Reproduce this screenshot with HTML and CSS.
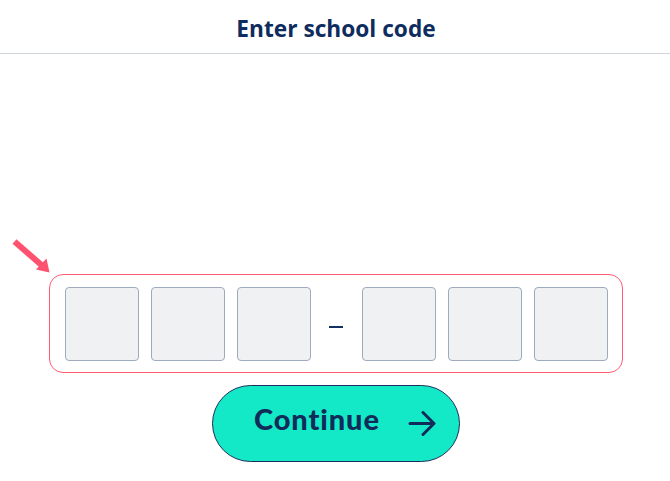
FILE: index.html
```html
<!DOCTYPE html>
<html lang="en">
<head>
<meta charset="utf-8">
<title>Enter school code</title>
<link rel="stylesheet" href="styles.css">
</head>
<body>
<header class="header">
  <h1 class="title">Enter school code</h1>
</header>
<main class="main">
  <div class="code-box">
    <svg class="pointer" viewBox="0 230 60 50" width="60" height="50" aria-hidden="true">
      <line x1="13.5" y1="241.5" x2="41" y2="265.5" stroke="#ff5270" stroke-width="6"/>
      <polygon points="35,269.5 45.5,258.5 48.5,272.5" fill="#ff5270"/>
    </svg>
    <input class="cell" type="text" maxlength="1" aria-label="Character 1">
    <input class="cell" type="text" maxlength="1" aria-label="Character 2">
    <input class="cell" type="text" maxlength="1" aria-label="Character 3">
    <span class="dash"></span>
    <input class="cell" type="text" maxlength="1" aria-label="Character 4">
    <input class="cell" type="text" maxlength="1" aria-label="Character 5">
    <input class="cell" type="text" maxlength="1" aria-label="Character 6">
  </div>
  <button class="continue" type="button">
    <span class="continue-label">Continue</span>
    <svg class="continue-arrow" viewBox="0 0 28 26" width="28" height="26" aria-hidden="true">
      <path d="M2 12.5 H25.5 M15 1.5 L26 12.5 L15 23.5" fill="none" stroke="#132b5b" stroke-width="3" stroke-linecap="round" stroke-linejoin="round"/>
    </svg>
  </button>
</main>
</body>
</html>
```

FILE: styles.css
```css
* { box-sizing: border-box; }

html, body {
  margin: 0;
  padding: 0;
  background: #ffffff;
}

body {
  font-family: "Open Sans", "Noto Sans", sans-serif;
}

.header {
  height: 54px;
  padding-top: 13.5px;
  border-bottom: 1px solid #cdd4dc;
}

.title {
  margin: 0;
  text-align: center;
  font-family: "Open Sans", sans-serif;
  font-weight: 700;
  font-size: 22.7px;
  line-height: 30px;
  color: #0e2c5d;
  padding-left: 2px;
}

.main {
  display: flex;
  flex-direction: column;
  align-items: center;
  padding-top: 220px;
  padding-left: 2px;
}

.code-box {
  position: relative;
  display: flex;
  align-items: center;
  gap: 12px;
  padding: 11.5px 14px 11.5px 14.5px;
  border: 1.5px solid #ff5b74;
  border-radius: 14px;
}

.pointer {
  position: absolute;
  left: -49px;
  top: -45.5px;
}

.cell {
  width: 74px;
  height: 74px;
  margin: 0;
  padding: 0;
  border: 1.5px solid #9dabbd;
  border-radius: 4px;
  background: #f0f1f3;
  font: inherit;
  outline: none;
}

.dash {
  width: 27px;
  height: 2px;
  display: flex;
  justify-content: center;
}

.dash::before {
  content: "";
  width: 14px;
  height: 2.5px;
  background: #143063;
  margin-top: 3px;
}

.continue {
  margin-top: 12px;
  width: 248px;
  height: 77px;
  display: flex;
  align-items: center;
  justify-content: space-between;
  padding: 0 23px 0 41px;
  border: 1.5px solid #1b2f5e;
  border-radius: 39px;
  background: #14e9c7;
  cursor: pointer;
}

.continue-label {
  font-family: "Lato", sans-serif;
  font-weight: 900;
  font-size: 29px;
  line-height: 29px;
  color: #122c5a;
  margin-bottom: 10px;
  letter-spacing: 0.9px;
}

.continue-arrow {
  display: block;
}
```
